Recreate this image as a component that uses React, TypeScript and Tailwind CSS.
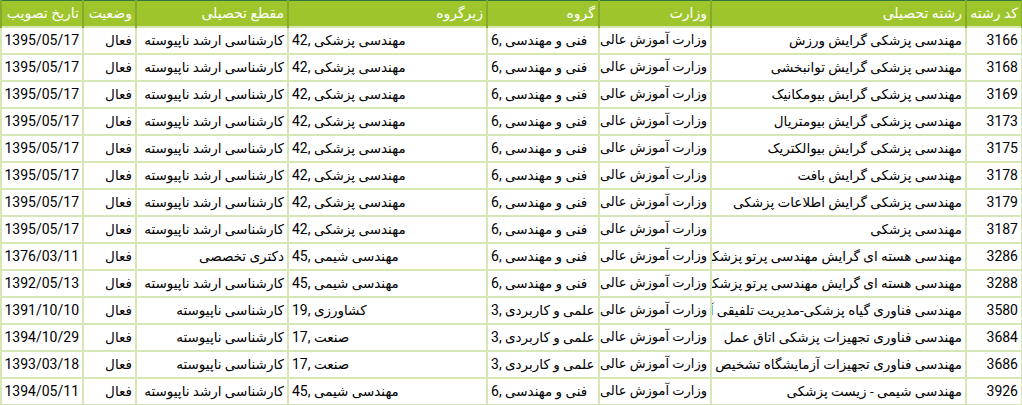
import React from "react";

type Row = {
  code: string;
  major: string;
  ministry: string;
  gNum: string;
  group: string;
  sNum: string;
  subgroup: string;
  level: string;
  status: string;
  date: string;
};

const rows: Row[] = [
  { code: "3166", major: "مهندسی پزشکی گرایش ورزش", ministry: "وزارت آموزش عالی", gNum: "6", group: "فنی و مهندسی", sNum: "42", subgroup: "مهندسی پزشکی", level: "کارشناسی ارشد ناپیوسته", status: "فعال", date: "1395/05/17" },
  { code: "3168", major: "مهندسی پزشکی گرایش توانبخشی", ministry: "وزارت آموزش عالی", gNum: "6", group: "فنی و مهندسی", sNum: "42", subgroup: "مهندسی پزشکی", level: "کارشناسی ارشد ناپیوسته", status: "فعال", date: "1395/05/17" },
  { code: "3169", major: "مهندسی پزشکی گرایش بیومکانیک", ministry: "وزارت آموزش عالی", gNum: "6", group: "فنی و مهندسی", sNum: "42", subgroup: "مهندسی پزشکی", level: "کارشناسی ارشد ناپیوسته", status: "فعال", date: "1395/05/17" },
  { code: "3173", major: "مهندسی پزشکی گرایش بیومتریال", ministry: "وزارت آموزش عالی", gNum: "6", group: "فنی و مهندسی", sNum: "42", subgroup: "مهندسی پزشکی", level: "کارشناسی ارشد ناپیوسته", status: "فعال", date: "1395/05/17" },
  { code: "3175", major: "مهندسی پزشکی گرایش بیوالکتریک", ministry: "وزارت آموزش عالی", gNum: "6", group: "فنی و مهندسی", sNum: "42", subgroup: "مهندسی پزشکی", level: "کارشناسی ارشد ناپیوسته", status: "فعال", date: "1395/05/17" },
  { code: "3178", major: "مهندسی پزشکی گرایش بافت", ministry: "وزارت آموزش عالی", gNum: "6", group: "فنی و مهندسی", sNum: "42", subgroup: "مهندسی پزشکی", level: "کارشناسی ارشد ناپیوسته", status: "فعال", date: "1395/05/17" },
  { code: "3179", major: "مهندسی پزشکی گرایش اطلاعات پزشکی", ministry: "وزارت آموزش عالی", gNum: "6", group: "فنی و مهندسی", sNum: "42", subgroup: "مهندسی پزشکی", level: "کارشناسی ارشد ناپیوسته", status: "فعال", date: "1395/05/17" },
  { code: "3187", major: "مهندسی پزشکی", ministry: "وزارت آموزش عالی", gNum: "6", group: "فنی و مهندسی", sNum: "42", subgroup: "مهندسی پزشکی", level: "کارشناسی ارشد ناپیوسته", status: "فعال", date: "1395/05/17" },
  { code: "3286", major: "مهندسی هسته ای گرایش مهندسی پرتو پزشکی", ministry: "وزارت آموزش عالی", gNum: "6", group: "فنی و مهندسی", sNum: "45", subgroup: "مهندسی شیمی", level: "دکتری تخصصی", status: "فعال", date: "1376/03/11" },
  { code: "3288", major: "مهندسی هسته ای گرایش مهندسی پرتو پزشکی", ministry: "وزارت آموزش عالی", gNum: "6", group: "فنی و مهندسی", sNum: "45", subgroup: "مهندسی شیمی", level: "کارشناسی ارشد ناپیوسته", status: "فعال", date: "1392/05/13" },
  { code: "3580", major: "مهندسی فناوری گیاه پزشکی-مدیریت تلفیقی آفات", ministry: "وزارت آموزش عالی", gNum: "3", group: "علمی و کاربردی", sNum: "19", subgroup: "کشاورزی", level: "کارشناسی ناپیوسته", status: "فعال", date: "1391/10/10" },
  { code: "3684", major: "مهندسی فناوری تجهیزات پزشکی اتاق عمل", ministry: "وزارت آموزش عالی", gNum: "3", group: "علمی و کاربردی", sNum: "17", subgroup: "صنعت", level: "کارشناسی ناپیوسته", status: "فعال", date: "1394/10/29" },
  { code: "3686", major: "مهندسی فناوری تجهیزات آزمایشگاه تشخیص طبی", ministry: "وزارت آموزش عالی", gNum: "3", group: "علمی و کاربردی", sNum: "17", subgroup: "صنعت", level: "کارشناسی ناپیوسته", status: "فعال", date: "1393/03/18" },
  { code: "3926", major: "مهندسی شیمی - زیست پزشکی", ministry: "وزارت آموزش عالی", gNum: "6", group: "فنی و مهندسی", sNum: "45", subgroup: "مهندسی شیمی", level: "کارشناسی ارشد ناپیوسته", status: "فعال", date: "1394/05/11" },
];

const th =
  "h-[26px] px-[3px] text-right font-normal text-white text-[14px] whitespace-nowrap overflow-hidden border-x-2 border-[#86aa2c] align-middle";
const td =
  "h-[27px] px-[3px] whitespace-nowrap overflow-hidden border-2 border-[#d6e6b4] align-middle text-black";

export default function App() {
  return (
    <div className="w-[1022px] h-[405px] bg-white overflow-hidden font-['Roboto','DejaVu_Sans',sans-serif] text-[13.5px] leading-[18px]">
      <table
        dir="rtl"
        className="table-fixed w-[1021px] border-collapse border-t border-t-[#2f7a3a] border-b-2 border-b-[#2f6b3a] border-r border-r-[#5a5a5a]"
      >
        <colgroup>
          <col className="w-[56px]" />
          <col className="w-[255px]" />
          <col className="w-[112px]" />
          <col className="w-[112px]" />
          <col className="w-[199px]" />
          <col className="w-[152px]" />
          <col className="w-[53px]" />
          <col className="w-[82px]" />
        </colgroup>
        <thead>
          <tr className="bg-[#9ec52b] border-b-2 border-b-[#86aa2c]">
            <th className={th}>کد رشته</th>
            <th className={th}>رشته تحصیلی</th>
            <th className={th}>وزارت</th>
            <th className={th}>گروه</th>
            <th className={th}>زیرگروه</th>
            <th className={th}>مقطع تحصیلی</th>
            <th className={th}>وضعیت</th>
            <th className={th}>تاریخ تصویب</th>
          </tr>
        </thead>
        <tbody>
          {rows.map((r) => (
            <tr key={r.code} className="bg-white">
              <td className={td + " text-right text-[14px]"}>{r.code}</td>
              <td className={td + " text-right"}>{r.major}</td>
              <td className={td + " text-right px-[1px] text-[13px] tracking-[-0.1px]"}>{r.ministry}</td>
              <td className={td + " text-left"} dir="ltr">
                <span className="text-[14px]">{r.gNum},</span> {r.group}
              </td>
              <td className={td + " text-left"} dir="ltr">
                <span className="text-[14px]">{r.sNum},</span> {r.subgroup}
              </td>
              <td className={td + " text-right"}>{r.level}</td>
              <td className={td + " text-right"}>{r.status}</td>
              <td className={td + " text-right text-[14px]"}>{r.date}</td>
            </tr>
          ))}
        </tbody>
      </table>
    </div>
  );
}
